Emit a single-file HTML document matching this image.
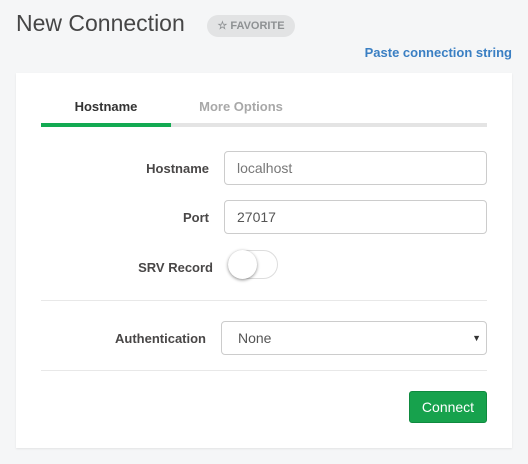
<!DOCTYPE html><html><head><style>
*{box-sizing:border-box}body{margin:0;width:528px;height:464px;background:#f5f6f7;font-family:"Liberation Sans",sans-serif;position:relative;overflow:hidden}
.a{position:absolute}
.lab{position:absolute;font-size:13px;font-weight:bold;color:#494747;text-align:right}
.inp{position:absolute;border:1px solid #ccc;border-radius:4px;background:#fff;font-size:14px;color:#555;padding-left:12px;line-height:32px}
</style></head><body>
<div class="a" style="left:16px;top:10px;font-size:23px;color:#464646">New Connection</div>
<div class="a" style="left:207px;top:15px;width:88px;height:22px;border-radius:11px;background:#e2e3e4;color:#8e9193;font-size:11px;font-weight:bold;line-height:22px;text-align:center">☆ FAVORITE</div>
<div class="a" style="right:16px;top:45px;font-size:13px;font-weight:bold;color:#3a7fc3">Paste connection string</div>
<div class="a" style="left:16px;top:73px;width:496px;height:375px;background:#fff;box-shadow:0 1px 2px rgba(0,0,0,.08)"></div>
<div class="a" style="left:41px;top:99px;width:130px;text-align:center;font-size:13px;font-weight:bold;color:#333">Hostname</div>
<div class="a" style="left:171px;top:99px;width:140px;text-align:center;font-size:13px;font-weight:bold;color:#a8a8a8">More Options</div>
<div class="a" style="left:41px;top:123px;width:446px;height:4px;background:#e4e4e4"></div>
<div class="a" style="left:41px;top:123px;width:130px;height:4px;background:#13aa52"></div>
<div class="lab" style="right:319px;top:161px">Hostname</div>
<div class="inp" style="left:224px;top:151px;width:263px;height:34px;color:#777">localhost</div>
<div class="lab" style="right:319px;top:210px">Port</div>
<div class="inp" style="left:224px;top:200px;width:263px;height:34px">27017</div>
<div class="lab" style="right:315px;top:260px">SRV Record</div>
<div class="a" style="left:228px;top:250px;width:50px;height:29px;border:1px solid #ddd;border-radius:15px;background:#fff"></div>
<div class="a" style="left:228px;top:250px;width:29px;height:29px;border-radius:50%;background:#fff;box-shadow:0 1px 3px rgba(0,0,0,.45)"></div>
<div class="a" style="left:41px;top:300px;width:446px;height:1px;background:#e8e8e8"></div>
<div class="lab" style="right:322px;top:331px">Authentication</div>
<div class="inp" style="left:221px;top:321px;width:266px;height:34px;padding-left:16px">None<span style="position:absolute;right:5px;top:0;font-size:9px;color:#333">▼</span></div>
<div class="a" style="left:41px;top:370px;width:446px;height:1px;background:#e8e8e8"></div>
<div class="a" style="left:409px;top:391px;width:78px;height:32px;border-radius:3px;background:#17a24d;border:1px solid #0f8a3f;color:#fff;font-size:14px;text-align:center;line-height:30px">Connect</div>
</body></html>
